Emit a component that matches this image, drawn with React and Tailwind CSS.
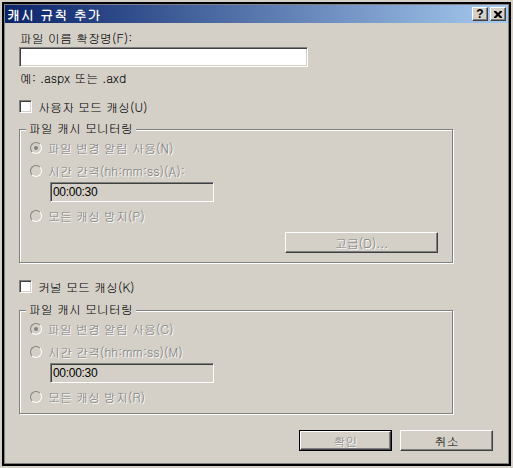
import React from 'react';

const font = "font-['Gulim','Noto_Sans_CJK_KR',sans-serif]";
const dim = 'text-[#808080] [text-shadow:1px_1px_0_#fff]';
const sunken = 'border border-[#808080] border-r-white border-b-white shadow-[inset_1px_1px_0_#404040,inset_-1px_-1px_0_#d4d0c8]';
const raised = 'border border-white border-r-[#404040] border-b-[#404040] shadow-[inset_-1px_-1px_0_#808080]';

const CheckBox = ({ label }) => (
    <div className="flex items-center h-[13px] gap-[6px]">
        <span className={`w-[13px] h-[13px] bg-white ${sunken}`} />
        <span className="leading-[12px] text-black">{label}</span>
    </div>
);

const Radio = ({ label, checked }) => (
    <div className="flex items-center h-[12px] gap-[6px]">
        <span className="w-[12px] h-[12px] rounded-full bg-[#d4d0c8] flex items-center justify-center border border-[#808080] border-r-white border-b-white">
            {checked && <span className="w-[4px] h-[4px] rounded-full bg-[#808080]" />}
        </span>
        <span className={`leading-[12px] ${dim}`}>{label}</span>
    </div>
);

const TimeBox = () => (
    <div className={`ml-[20px] mt-[5px] w-[164px] h-[20px] bg-[#d4d0c8] flex items-center pl-[2px] ${sunken}`}>
        <span className="font-['Liberation_Sans',sans-serif] text-[12px] tracking-[-0.3px] leading-[12px] text-black">00:00:30</span>
    </div>
);

// 파일 캐시 모니터링 그룹
const MonitorGroup = ({ labels, withButton }) => (
    <div className={`relative w-[434px] border border-[#808080] shadow-[inset_1px_1px_0_#fff,1px_1px_0_#fff] pt-[12px] pl-[10px] pr-[14px] ${withButton ? 'h-[134px]' : 'h-[104px]'}`}>
        <span className="absolute -top-[8px] left-[6px] px-[3px] bg-[#d4d0c8] leading-[12px] text-black">파일 캐시 모니터링</span>
        <Radio label={labels[0]} checked />
        <div className="mt-[11px]">
            <Radio label={labels[1]} />
        </div>
        <TimeBox />
        <div className="mt-[8px]">
            <Radio label={labels[2]} />
        </div>
        {withButton && (
            <div className="mt-[10px] flex justify-end">
                <div className={`w-[153px] h-[21px] flex items-center justify-center ${raised}`}>
                    <span className={`leading-[12px] ${dim}`}>고급(D)...</span>
                </div>
            </div>
        )}
    </div>
);

const App = () => {
    return (
        <div className={`w-[513px] h-[468px] bg-[#d4d0c8] p-[2px] text-[12px] ${font}`}>
            <div className="h-full border-2 border-black">
                <div className="h-full border border-[#808080] flex flex-col">
                    {/* title bar */}
                    <div className="h-[18px] flex items-center justify-between pl-[2px] pr-[2px] bg-[linear-gradient(to_right,#0a246a,#a6caf0)]">
                        <span className="text-white font-bold text-[13px] leading-[13px] tracking-[1px]">캐시 규칙 추가</span>
                        <div className="flex gap-[2px]">
                            <div className={`w-[16px] h-[14px] bg-[#d4d0c8] flex items-center justify-center ${raised}`}>
                                <span className="font-['Liberation_Sans',sans-serif] font-bold text-[12px] leading-[11px] text-black">?</span>
                            </div>
                            <div className={`w-[16px] h-[14px] bg-[#d4d0c8] flex items-center justify-center ${raised}`}>
                                <svg width="8" height="7" viewBox="0 0 8 7">
                                    <path d="M0 0h2l2 2 2-2h2v1l-2.5 2.5L8 6v1H6L4 5 2 7H0V6l2.5-2.5L0 1z" fill="#000" />
                                </svg>
                            </div>
                        </div>
                    </div>

                    <div className="flex-1 pt-[9px] pl-[14px] pr-[15px] text-black">
                        <div className="leading-[12px] pl-[1px]">파일 이름 확장명(F):</div>
                        <div className={`mt-[3px] w-[289px] h-[20px] bg-white ${sunken}`} />
                        <div className="mt-[5px] leading-[12px] pl-[1px]">예: .aspx 또는 .axd</div>

                        <div className="mt-[16px]">
                            <CheckBox label="사용자 모드 캐싱(U)" />
                        </div>
                        <div className="mt-[16px]">
                            <MonitorGroup
                                withButton
                                labels={['파일 변경 알림 사용(N)', '시간 간격(hh:mm:ss)(A):', '모든 캐싱 방지(P)']}
                            />
                        </div>

                        <div className="mt-[17px]">
                            <CheckBox label="커널 모드 캐싱(K)" />
                        </div>
                        <div className="mt-[17px]">
                            <MonitorGroup
                                labels={['파일 변경 알림 사용(C)', '시간 간격(hh:mm:ss)(M)', '모든 캐싱 방지(R)']}
                            />
                        </div>

                        <div className="mt-[16px] flex justify-end gap-[8px]">
                            <div className="w-[93px] h-[21px] border border-black">
                                <div className={`h-full flex items-center justify-center ${raised}`}>
                                    <span className={`leading-[12px] ${dim}`}>확인</span>
                                </div>
                            </div>
                            <div className={`w-[93px] h-[21px] flex items-center justify-center ${raised}`}>
                                <span className="leading-[12px]">취소</span>
                            </div>
                        </div>
                    </div>
                </div>
            </div>
        </div>
    );
};

export default App;
